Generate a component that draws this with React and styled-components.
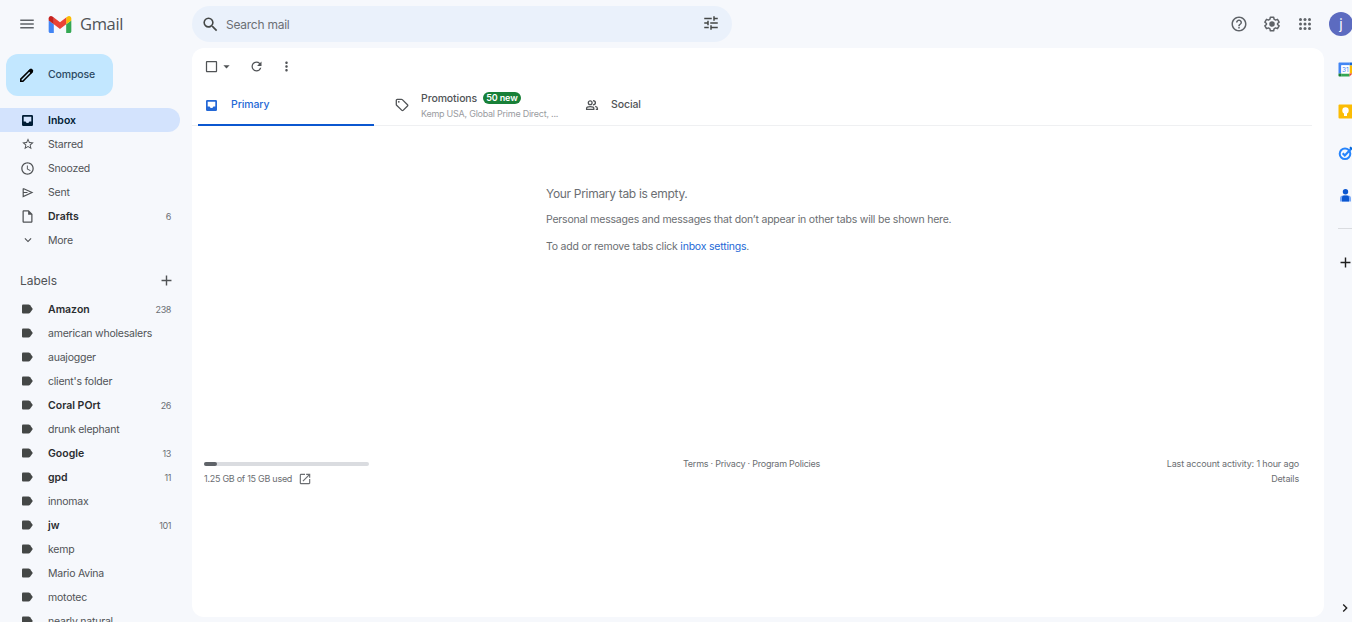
import React from 'react';
import styled, { createGlobalStyle } from 'styled-components';
import {
  MdAdd,
  MdArrowDropDown,
  MdCheckBoxOutlineBlank,
  MdChevronRight,
  MdExpandMore,
  MdHelpOutline,
  MdMenu,
  MdMoreVert,
  MdOpenInNew,
  MdOutlineInsertDriveFile,
  MdRefresh,
  MdSchedule,
  MdSearch,
  MdStarBorder,
  MdTune,
} from 'react-icons/md';

const GlobalStyle = createGlobalStyle`
  * {
    box-sizing: border-box;
  }

  body {
    margin: 0;
    overflow: hidden;
    background: #f6f8fc;
    color: #505356;
    font-family: Inter, Roboto, 'Liberation Sans', sans-serif;
    font-size: 10.5px;
  }

  svg {
    display: block;
    flex-shrink: 0;
  }
`;

const Page = styled.div`
  display: flex;
  flex-direction: column;
  height: 100vh;
  overflow: hidden;
`;

const Header = styled.header`
  display: flex;
  align-items: center;
  height: 48px;
  flex-shrink: 0;
`;

const Brand = styled.div`
  display: flex;
  align-items: center;
  width: 192px;
  padding-left: 18px;
  color: #5f6368;
`;

const BrandLogo = styled.div`
  margin: 0 8px 0 12px;
`;

const BrandName = styled.span`
  color: #505357;
  font-family: 'Open Sans', sans-serif;
  font-size: 16.5px;
  letter-spacing: -0.35px;
  line-height: 22px;
  padding-bottom: 1px;
`;

const SearchBar = styled.div`
  display: flex;
  align-items: center;
  width: 540px;
  height: 36px;
  padding: 0 12px 0 9px;
  border-radius: 18px;
  background: #eaf1fb;
  color: #444746;
`;

const SearchText = styled.span`
  flex: 1;
  margin-left: 6px;
  color: #6b6f74;
  font-size: 12px;
  letter-spacing: -0.25px;
`;

const FilterIcon = styled.span`
  margin-top: -2px;
`;

const HeaderActions = styled.div`
  display: flex;
  align-items: center;
  gap: 15px;
  margin-left: auto;
  color: #5f6368;
`;

const Avatar = styled.div`
  display: flex;
  justify-content: center;
  width: 24px;
  height: 24px;
  margin-right: -1px;
  border-radius: 50%;
  background: #5c6bc0;
  color: #fff;
  font-size: 14px;
  line-height: 23px;
`;

const Body = styled.div`
  display: flex;
  flex: 1;
  min-height: 0;
`;

const Sidebar = styled.nav`
  width: 192px;
  flex-shrink: 0;
  overflow: hidden;
`;

const ComposeButton = styled.div`
  display: flex;
  align-items: center;
  width: 107px;
  height: 42px;
  margin: 6px 0 12px 6px;
  padding: 0 0 1px 13px;
  gap: 13px;
  border-radius: 12px;
  background: #c2e7ff;
  color: #2c4a63;
  font-weight: 500;
  letter-spacing: -0.15px;
`;

const Row = styled.div`
  display: flex;
  align-items: center;
  width: 180px;
  height: 24px;
  padding: 0 9px 0 20px;
  border-radius: 0 12px 12px 0;
  background: ${props => (props.$active ? '#d3e3fd' : 'transparent')};
  color: ${props => (props.$active ? '#001d35' : 'inherit')};
`;

const RowIcon = styled.span`
  display: flex;
  justify-content: center;
  width: 15px;
`;

const RowName = styled.span`
  flex: 1;
  margin-left: 13px;
  color: ${props => (props.$unread && !props.$active ? '#2b2d30' : 'inherit')};
  font-weight: ${props => (props.$unread ? 600 : 400)};
  letter-spacing: ${props => (props.$unread ? '0' : '-0.22px')};
  white-space: nowrap;
`;

const RowCount = styled.span`
  color: #6b6f74;
  font-size: 9px;
  letter-spacing: -0.4px;
`;

const LabelsHeader = styled.div`
  display: flex;
  align-items: center;
  justify-content: space-between;
  width: 175px;
  height: 28px;
  margin: 14px 0 3px;
  padding-left: 20px;
  font-size: 12px;
`;

const Content = styled.main`
  display: flex;
  flex-direction: column;
  flex: 1;
  height: 569px;
  border-radius: 12px;
  background: #fff;
`;

const Toolbar = styled.div`
  display: flex;
  align-items: center;
  height: 36px;
  padding-left: 12px;
`;

const SelectControl = styled.div`
  display: flex;
  align-items: center;
  width: 45px;
`;

const RefreshControl = styled.div`
  width: 30px;
`;

const Tabs = styled.div`
  display: flex;
  height: 42px;
  margin-right: 12px;
  border-bottom: 1px solid #eff0f2;
`;

const Tab = styled.div`
  display: flex;
  align-items: center;
  width: ${props => (props.$active ? '176px' : '190px')};
  height: 42px;
  margin: ${props => (props.$active ? '0 8px 0 6px' : '0')};
  padding-left: ${props => (props.$active ? '6px' : '12px')};
  border-bottom: 2px solid ${props => (props.$active ? '#0b57d0' : 'transparent')};
  color: ${props => (props.$active ? '#2468d6' : 'inherit')};
`;

const TabIcon = styled.span`
  display: flex;
  justify-content: center;
  width: 15px;
  margin-top: 2px;
`;

const TabText = styled.div`
  margin-left: 12px;
  font-weight: 500;
  letter-spacing: -0.1px;
  line-height: 15px;
`;

const TabTitle = styled.div`
  display: flex;
  align-items: center;
  gap: 6px;
  margin-top: 3px;
`;

const NewBadge = styled.span`
  height: 12px;
  padding: 0 3px;
  border-radius: 6px;
  background: #188038;
  color: #fff;
  font-size: 9px;
  font-weight: 600;
  letter-spacing: -0.1px;
  line-height: 12px;
`;

const TabSenders = styled.div`
  color: #9a9c9f;
  font-size: 9px;
  font-weight: 400;
  letter-spacing: -0.25px;
  white-space: nowrap;
`;

const EmptyMessage = styled.section`
  width: 420px;
  height: 330px;
  margin-left: 354px;
  padding-top: 58px;
  color: #6b6e72;
  letter-spacing: -0.21px;
`;

const EmptyTitle = styled.div`
  margin-bottom: 8px;
  font-size: 12px;
  letter-spacing: -0.31px;
  line-height: 20px;
`;

const EmptyLine = styled.div`
  margin-bottom: 12px;
  line-height: 15px;
  white-space: nowrap;
`;

const SettingsLink = styled.span`
  color: #2468d6;
`;

const Footer = styled.footer`
  display: grid;
  grid-template-columns: 1fr 1fr 1fr;
  padding: 0 25px 0 12px;
  color: #6b6e72;
  font-size: 9px;
  letter-spacing: -0.15px;
  line-height: 15px;
`;

const Storage = styled.div`
  padding-top: 6px;
`;

const StorageTrack = styled.div`
  width: 165px;
  height: 4px;
  margin-bottom: 5px;
  border-radius: 2px;
  background: #dadce0;
`;

const StorageUsed = styled.div`
  width: 13px;
  height: 4px;
  border-radius: 2px;
  background: #5f6368;
`;

const StorageText = styled.div`
  display: flex;
  align-items: center;
  gap: 6px;
  letter-spacing: -0.27px;
`;

const FooterLinks = styled.div`
  letter-spacing: -0.23px;
  text-align: center;
`;

const Activity = styled.div`
  text-align: right;
`;

const SidePanel = styled.aside`
  display: flex;
  flex-direction: column;
  width: 28px;
  height: 574px;
  padding: 14px 0 6px 14px;
  overflow: hidden;
  color: #1f1f1f;
`;

const AppIcon = styled.div`
  height: 42px;
`;

const Divider = styled.div`
  height: 1px;
  margin-top: -2px;
  background: #dadce0;
`;

const AddOn = styled.div`
  margin: 25px 0 0 -1px;
`;

const Collapse = styled.div`
  margin: auto 0 0 -1px;
`;

const GmailLogo = () => (
  <svg width="24" height="17" viewBox="50 42 92 66">
    <path fill="#4285f4" d="M58 108h14V74L52 59v43c0 3.320 2.690 6 6 6" />
    <path fill="#34a853" d="M120 108h14c3.320 0 6-2.690 6-6V59l-20 15" />
    <path fill="#fbbc04" d="M120 48v26l20-15v-8c0-7.420-8.470-11.650-14.400-7.200" />
    <path fill="#ea4335" d="M72 74V48l24 18 24-18v26L96 92" />
    <path fill="#c5221f" d="M52 51v8l20 15V48l-5.600-4.200c-5.940-4.450-14.400-.220-14.400 7.200" />
  </svg>
);

const PencilIcon = () => (
  <svg width="16" height="16" viewBox="0 0 16 16" fill="none">
    <path
      d="M1.800 12.100 10.700 3.200a1.300 1.300 0 0 1 1.900 0l.200.200a1.300 1.300 0 0 1 0 1.900L3.900 14.200H1.800z"
      stroke="#000"
      strokeWidth="1.600"
    />
    <path d="M9.300 3.700 11 2q1.100-.900 2.200.200l.600.600q1 1.100 0 2.200l-1.700 1.700z" fill="#000" />
  </svg>
);

const InboxIcon = () => (
  <svg width="13" height="13" viewBox="0 0 13 13">
    <path
      fill="currentColor"
      fillRule="evenodd"
      d="M2.200 1h8.600q1.200 0 1.200 1.200v8.600q0 1.200-1.200 1.200H2.200Q1 12 1 10.800V2.200Q1 1 2.200 1M2.700 2.700v4.700h1.900q.5 1.700 1.900 1.700t1.900-1.700h1.900V2.700z"
    />
  </svg>
);

const SendIcon = () => (
  <svg width="12" height="11" viewBox="0 0 12 11" fill="none" stroke="currentColor">
    <path d="M1.200 1.500 10 5.500 1.200 9.500V1.500M1.200 5.500H5.500" strokeWidth="1.200" />
  </svg>
);

const LabelIcon = () => (
  <svg width="13" height="10" viewBox="0 0 13 10" fill="#444746">
    <path d="M2 .5h5.500q1 0 1.600.8L11.800 5 9.100 8.700q-.6.8-1.600.8H2Q1 9.500 1 8.500v-7Q1 .5 2 .5" />
  </svg>
);

const TagIcon = () => (
  <svg width="14" height="14" viewBox="0 0 14 14">
    <path
      d="M1.300 2.200q0-.900.900-.900h4.300q.5 0 .8.300l5.200 5.200q.6.600 0 1.200l-4.400 4.400q-.6.600-1.200 0L1.600 7.200q-.3-.3-.3-.8z"
      fill="none"
      stroke="currentColor"
      strokeWidth="1.300"
    />
    <circle cx="3.800" cy="3.800" r=".9" fill="currentColor" />
  </svg>
);

const PeopleIcon = () => (
  <svg width="14" height="12" viewBox="0 0 14 12" fill="none" stroke="currentColor" strokeWidth="1.300">
    <circle cx="5.200" cy="3.700" r="1.900" />
    <path d="M1.600 10.300V9.200q0-.7.7-1Q5.200 7 8.100 8.200q.7.300.7 1v1.100z" />
    <path d="M8 1.600q2.400.100 2.400 2.100T8 5.800M10.200 7.400q2.200.6 2.200 1.800v1.100h-1.600" />
  </svg>
);

const GearIcon = () => (
  <svg width="18" height="18" viewBox="0 0 24 24">
    <path
      d="M9.800 2.900h4.400l.5 2.700 2 1.200 2.600-1 2.200 3.800-2.100 1.700v1.400l2.100 1.700-2.200 3.800-2.600-1-2 1.200-.5 2.700H9.800l-.5-2.700-2-1.200-2.600 1-2.200-3.800 2.100-1.700v-1.400L2.500 9.600l2.200-3.800 2.600 1 2-1.200z"
      fill="none"
      stroke="currentColor"
      strokeWidth="2"
      strokeLinejoin="round"
    />
    <circle cx="12" cy="12" r="3.700" fill="currentColor" />
  </svg>
);

const AppsIcon = () => (
  <svg width="18" height="18" viewBox="0 0 18 18" fill="currentColor">
    {[4.500, 9, 13.500].map(cy =>
      [4.500, 9, 13.500].map(cx => <circle key={`${cx}-${cy}`} cx={cx} cy={cy} r="1.500" />)
    )}
  </svg>
);

const CalendarIcon = () => (
  <svg width="15" height="15" viewBox="0 0 15 15">
    <path d="M1.200.5h10.300v3H3.500v8H.5V1.200Q.5.500 1.200.5" fill="#4285f4" />
    <path d="M11.500.5h2.300q.7 0 .7.700v2.300h-3z" fill="#1967d2" />
    <path d="M11.500 3.500h3v8h-3z" fill="#fbbc04" />
    <path d="M3.500 11.500h8v3h-8z" fill="#34a853" />
    <path d="M.5 11.500h3v3H1.200q-.7 0-.7-.7z" fill="#188038" />
    <path d="M11.500 11.500h3l-3 3z" fill="#ea4335" />
    <path d="M3.200 3.200h8.300v8.300H3.200z" fill="#fff" />
    <text x="7.300" y="10" fill="#4285f4" fontSize="6.500" textAnchor="middle">31</text>
  </svg>
);

const KeepIcon = () => (
  <svg width="15" height="15" viewBox="0 0 15 15">
    <rect x=".5" y=".5" width="14" height="14" rx="1" fill="#fbbc04" />
    <circle cx="7.500" cy="6.500" r="3.200" fill="#fff" />
    <path d="M6 9h3v3H6z" fill="#fff" />
  </svg>
);

const TasksIcon = () => (
  <svg width="15" height="15" viewBox="0 0 15 15" fill="none">
    <circle cx="7" cy="7.700" r="5.300" stroke="#2684fc" strokeWidth="2" />
    <path d="m4.700 7.300 2.100 2.200L13 3" stroke="#2684fc" strokeWidth="2.200" />
    <path d="m12 1.200 2.200 2.200" stroke="#0066da" strokeWidth="2" />
  </svg>
);

const ContactsIcon = () => (
  <svg width="15" height="15" viewBox="0 0 15 15">
    <circle cx="7.500" cy="3.700" r="2.700" fill="#0b57d0" />
    <path d="M2 13.500v-3q0-3 3-3h5q3 0 3 3v3z" fill="#7baaf7" />
    <path d="M4 13.500V9.500q0-2 2-2h3q2 0 2 2v4z" fill="#0b57d0" />
  </svg>
);

const FOLDERS = [
  { name: 'Inbox', icon: <InboxIcon />, active: true, unread: true },
  { name: 'Starred', icon: <MdStarBorder size={14} /> },
  { name: 'Snoozed', icon: <MdSchedule size={15} /> },
  { name: 'Sent', icon: <SendIcon /> },
  { name: 'Drafts', icon: <MdOutlineInsertDriveFile size={15} />, unread: true, count: 6 },
  { name: 'More', icon: <MdExpandMore size={14} /> },
];

const LABELS = [
  { name: 'Amazon', count: 238 },
  { name: 'american wholesalers' },
  { name: 'auajogger' },
  { name: "client's folder" },
  { name: 'Coral POrt', count: 26 },
  { name: 'drunk elephant' },
  { name: 'Google', count: 13 },
  { name: 'gpd', count: 11 },
  { name: 'innomax' },
  { name: 'jw', count: 101 },
  { name: 'kemp' },
  { name: 'Mario Avina' },
  { name: 'mototec' },
  { name: 'nearly natural' },
];

const SidebarRow = ({ name, icon, active, unread, count }) => (
  <Row $active={active}>
    <RowIcon>{icon}</RowIcon>
    <RowName $unread={unread} $active={active}>
      {name}
    </RowName>
    {count && <RowCount>{count}</RowCount>}
  </Row>
);

const App = () => (
  <Page>
    <GlobalStyle />
    <Header>
      <Brand>
        <MdMenu size={18} />
        <BrandLogo>
          <GmailLogo />
        </BrandLogo>
        <BrandName>Gmail</BrandName>
      </Brand>
      <SearchBar>
        <MdSearch size={19} />
        <SearchText>Search mail</SearchText>
        <FilterIcon>
          <MdTune size={18} />
        </FilterIcon>
      </SearchBar>
      <HeaderActions>
        <MdHelpOutline size={18} />
        <GearIcon />
        <AppsIcon />
        <Avatar>j</Avatar>
      </HeaderActions>
    </Header>

    <Body>
      <Sidebar>
        <ComposeButton>
          <PencilIcon />
          Compose
        </ComposeButton>
        {FOLDERS.map(folder => (
          <SidebarRow key={folder.name} {...folder} />
        ))}
        <LabelsHeader>
          Labels
          <MdAdd size={17} />
        </LabelsHeader>
        {LABELS.map(label => (
          <SidebarRow
            key={label.name}
            icon={<LabelIcon />}
            unread={Boolean(label.count)}
            {...label}
          />
        ))}
      </Sidebar>

      <Content>
        <Toolbar>
          <SelectControl>
            <MdCheckBoxOutlineBlank size={15} />
            <MdArrowDropDown size={15} />
          </SelectControl>
          <RefreshControl>
            <MdRefresh size={15} />
          </RefreshControl>
          <MdMoreVert size={15} />
        </Toolbar>
        <Tabs>
          <Tab $active>
            <TabIcon>
              <InboxIcon />
            </TabIcon>
            <TabText>Primary</TabText>
          </Tab>
          <Tab>
            <TabIcon>
              <TagIcon />
            </TabIcon>
            <TabText>
              <TabTitle>
                Promotions
                <NewBadge>50 new</NewBadge>
              </TabTitle>
              <TabSenders>Kemp USA, Global Prime Direct, ...</TabSenders>
            </TabText>
          </Tab>
          <Tab>
            <TabIcon>
              <PeopleIcon />
            </TabIcon>
            <TabText>Social</TabText>
          </Tab>
        </Tabs>

        <EmptyMessage>
          <EmptyTitle>Your Primary tab is empty.</EmptyTitle>
          <EmptyLine>
            Personal messages and messages that don’t appear in other tabs will be shown here.
          </EmptyLine>
          <EmptyLine>
            To add or remove tabs click <SettingsLink>inbox settings</SettingsLink>.
          </EmptyLine>
        </EmptyMessage>

        <Footer>
          <Storage>
            <StorageTrack>
              <StorageUsed />
            </StorageTrack>
            <StorageText>
              1.25 GB of 15 GB used
              <MdOpenInNew size={14} />
            </StorageText>
          </Storage>
          <FooterLinks>Terms · Privacy · Program Policies</FooterLinks>
          <Activity>
            <div>Last account activity: 1 hour ago</div>
            <div>Details</div>
          </Activity>
        </Footer>
      </Content>

      <SidePanel>
        <AppIcon>
          <CalendarIcon />
        </AppIcon>
        <AppIcon>
          <KeepIcon />
        </AppIcon>
        <AppIcon>
          <TasksIcon />
        </AppIcon>
        <AppIcon>
          <ContactsIcon />
        </AppIcon>
        <Divider />
        <AddOn>
          <MdAdd size={17} />
        </AddOn>
        <Collapse>
          <MdChevronRight size={16} />
        </Collapse>
      </SidePanel>
    </Body>
  </Page>
);

export default App;
